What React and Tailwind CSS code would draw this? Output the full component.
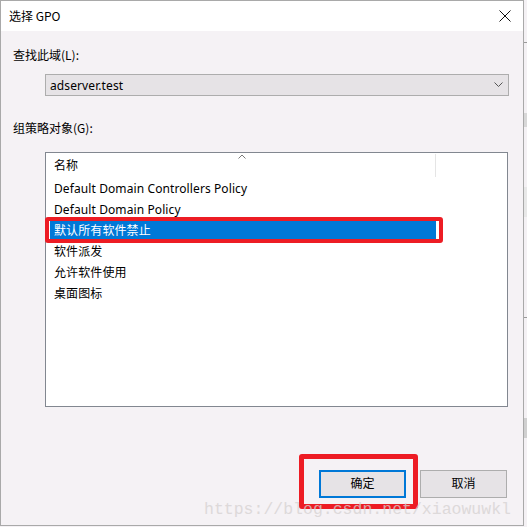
import React from "react";

const font = { fontFamily: '"Noto Sans", "Noto Sans CJK SC", sans-serif' };

function Row({ children, selected }) {
  return (
    <div className={"relative h-[21px] flex items-center text-[12px] leading-[21px] tracking-[0.1px] " + (selected ? "text-white" : "text-black")}>
      {selected && <div className="absolute left-[4px] top-0 w-[386px] h-[21px] bg-[#0078d7]" />}
      {selected && <div className="absolute left-[390px] top-[2px] w-[2px] h-[17px] bg-white" />}
      <span className="relative pl-[8px]">{children}</span>
    </div>
  );
}

export default function App() {
  return (
    <div className="relative w-[527px] h-[527px] flex bg-[#f4f1f4] overflow-hidden" style={font}>
      <div className="w-[524px] h-[526px] border border-[#a9a9a9] bg-[#f5f2f5] flex flex-col shrink-0">
        <div className="h-[30px] bg-white flex items-center justify-between pl-[8px] pr-[12px]">
          <span className="text-[12px] text-black leading-[16px] font-['Noto_Sans_CJK_SC']">选择 GPO</span>
          <svg width="12" height="12" viewBox="0 0 12 12">
            <path d="M0.5 0.5 L11.5 11.5 M11.5 0.5 L0.5 11.5" stroke="#111" strokeWidth="1" fill="none" />
          </svg>
        </div>
        <div className="ml-[12px] mt-[16px] h-[16px] leading-[16px] text-[12px] text-black font-['Noto_Sans_CJK_SC']">查找此域(L):</div>
        <div className="ml-[44px] mt-[11px] w-[464px] h-[22px] border border-[#adadad] bg-[#e6e3e6] flex items-center justify-between pl-[4px] pr-[5px]">
          <span className="text-[12px] text-black leading-[16px] pt-[2px] tracking-[0.1px]">adserver.test</span>
          <svg width="9" height="6" viewBox="0 0 9 6">
            <path d="M0.5 0.5 L4.5 4.5 L8.5 0.5" stroke="#555" strokeWidth="1" fill="none" />
          </svg>
        </div>
        <div className="ml-[12px] mt-[24px] h-[16px] leading-[16px] text-[12px] text-black font-['Noto_Sans_CJK_SC']">组策略对象(G):</div>
        <div className="ml-[44px] mt-[16px] w-[463px] h-[255px] border border-[#828790] bg-white flex flex-col">
          <div className="relative h-[25px] flex items-center">
            <span className="pl-[8px] text-[12px] text-black leading-[16px]">名称</span>
            <svg className="absolute left-[192px] top-[1px]" width="8" height="5" viewBox="0 0 8 5">
              <path d="M0.5 4.5 L4 1 L7.5 4.5" stroke="#7a7a7a" strokeWidth="1" fill="none" />
            </svg>
            <div className="absolute left-[389px] top-[1px] w-px h-[23px] bg-[#e5e5e5]" />
          </div>
          <Row>Default Domain Controllers Policy</Row>
          <Row>Default Domain Policy</Row>
          <Row selected>默认所有软件禁止</Row>
          <Row>软件派发</Row>
          <Row>允许软件使用</Row>
          <Row>桌面图标</Row>
        </div>
        <div className="mt-[63px] ml-[318px] flex gap-[14px]">
          <div className="w-[87px] h-[28px] border-2 border-[#0078d7] bg-[#e6e3e6] flex items-center justify-center text-[12px] text-black">确定</div>
          <div className="w-[87px] h-[28px] border border-[#adadad] bg-[#e6e3e6] flex items-center justify-center text-[12px] text-black">取消</div>
        </div>
      </div>
      <div className="flex-1 flex flex-col">
        <div className="h-[42px]" />
        <div className="h-px bg-[#9a9a9a]" />
        <div className="h-[70px]" />
        <div className="h-[14px] bg-[#d8d8d8]" />
        <div className="h-[60px]" />
        <div className="h-[30px] bg-[#e8e8e8]" />
        <div className="h-[100px]" />
        <div className="h-px bg-[#9a9a9a]" />
        <div className="h-[100px]" />
        <div className="h-[20px] bg-[#d0d0d0]" />
      </div>

      <div className="absolute left-[45px] top-[217px] w-[398px] h-[26px] border-4 border-[#ed1c24] rounded-[3px]" />
      <div className="absolute left-[299px] top-[454px] w-[119px] h-[55px] border-[5px] border-[#ed1c24] rounded-[3px]" />
      <div className="absolute left-[204px] top-[500px] text-[16.5px] leading-[20px] text-[#d6d1d1] opacity-75 font-['Liberation_Mono'] whitespace-nowrap">
        https://blog.csdn.net/xiaowuwkl
      </div>
    </div>
  );
}
